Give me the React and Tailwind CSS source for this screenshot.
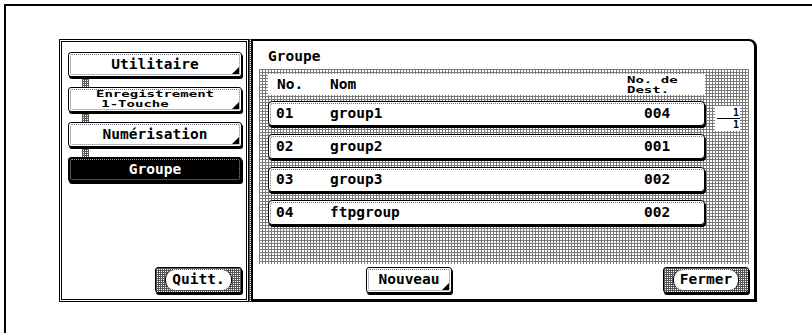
import React from "react";

const F = "font-['DejaVu_Sans_Mono','Liberation_Mono',monospace] font-bold";
const DITHER =
  "bg-white bg-[linear-gradient(to_right,#7a7a7a_1px,transparent_1px),linear-gradient(#7a7a7a_1px,transparent_1px)] bg-[length:3px_3px]";
const DITHER_DARK =
  "bg-white bg-[linear-gradient(to_right,#555_1px,transparent_1px),linear-gradient(#555_1px,transparent_1px)] bg-[length:2px_2px]";

function Tri() {
  return (
    <svg className="absolute right-[2px] bottom-[2px]" width="7" height="7" viewBox="0 0 7 7">
      <polygon points="7,0 7,7 0,7" fill="#000" />
    </svg>
  );
}

function Squish({ children, className = "" }) {
  return (
    <span className={`block h-[10px] overflow-visible text-[14px] leading-[10px] ${className}`}>
      <span className="block origin-center scale-y-[0.6] leading-[16px] -translate-y-[3px]">{children}</span>
    </span>
  );
}

function MenuBtn({ children, selected, tri = true }) {
  return (
    <div
      className={`relative h-[25px] w-[174px] rounded-[3px] border border-black shadow-[1px_2px_0_#000] ${
        selected ? "bg-black text-white" : "bg-white text-black"
      }`}
    >
      <div
        className={`absolute inset-[1px] rounded-[2px] border border-dotted ${
          selected ? "border-gray-400" : "border-gray-500"
        }`}
      />
      <div className={`relative flex h-full items-center justify-center ${F}`}>{children}</div>
      {tri && !selected && <Tri />}
    </div>
  );
}

function Connector() {
  return (
    <div className="flex h-[10px] pl-[14px]">
      <div className={`h-full w-[7px] ${DITHER_DARK}`} />
    </div>
  );
}

function PillBtn({ children, w }) {
  return (
    <div
      className={`flex h-[26px] items-stretch rounded-[3px] border border-black px-[9px] py-[2px] shadow-[1px_2px_0_#000] ${DITHER_DARK}`}
      style={{ width: w }}
    >
      <div
        className={`flex flex-1 items-center justify-center rounded-[9px] border-x border-black bg-white text-[14.5px] text-black ${F}`}
      >
        {children}
      </div>
    </div>
  );
}

function Row({ no, name, count }) {
  return (
    <div className="relative h-[25px] w-[437px] rounded-[4px] border border-black bg-white shadow-[1px_2px_0_#000]">
      <div className="absolute inset-y-[1px] left-[1px] right-[1px] rounded-[3px] border-l border-t border-dotted border-gray-500" />
      <div className={`relative flex h-full items-center text-[14.5px] text-black ${F}`}>
        <span className="w-[61px] pl-[7px]">{no}</span>
        <span className="flex-1">{name}</span>
        <span className="w-[60px]">{count}</span>
      </div>
    </div>
  );
}

export default function App() {
  const rows = [
    ["01", "group1", "004"],
    ["02", "group2", "001"],
    ["03", "group3", "002"],
    ["04", "ftpgroup", "002"],
  ];
  return (
    <div className="h-[333px] w-[812px] overflow-hidden bg-white pl-[4px] pt-[4px]">
      <div className="h-[329px] w-[808px] border-l-2 border-t-2 border-black pl-[53px] pt-[33px]">
        <div className="flex h-[263px]">
          {/* Left panel */}
          <div className="h-full w-[190px] border border-black bg-white p-[1px]">
            <div className="flex h-full flex-col border border-black pl-[6px] pt-[10px] pb-[6px]">
              <MenuBtn>
                <span className="text-[14.5px]">Utilitaire</span>
              </MenuBtn>
              <Connector />
              <MenuBtn>
                <span className="flex flex-col items-center pb-[1px]">
                  <Squish>Enregistrement</Squish>
                  <Squish className="pr-[40px]">1-Touche</Squish>
                </span>
              </MenuBtn>
              <Connector />
              <MenuBtn>
                <span className="text-[14.5px]">Numérisation</span>
              </MenuBtn>
              <Connector />
              <MenuBtn selected>
                <span className="text-[14.5px]">Groupe</span>
              </MenuBtn>
              <div className="mt-auto flex pl-[87px]">
                <PillBtn w={87}>Quitt.</PillBtn>
              </div>
            </div>
          </div>
          {/* divider */}
          <div className={`h-full w-[2px] ${DITHER_DARK}`} />
          {/* Right panel */}
          <div className="flex h-full w-[506px] flex-col rounded-tr-[8px] border-b-[3px] border-l-2 border-r-[3px] border-t-2 border-black bg-white pl-[6px] pr-[5px]">
            <div className={`flex h-[28px] items-center pl-[9px] pt-[4px] text-[14.5px] text-black ${F}`}>
              Groupe
            </div>
            <div className={`flex h-[195px] w-[490px] pl-[9px] pt-[5px] ${DITHER}`}>
              <div className="flex flex-col gap-[8px]">
                <div className={`mb-[-2px] flex h-[21px] w-[437px] items-center bg-white text-[14.5px] text-black ${F}`}>
                  <span className="w-[62px] pl-[9px]">No.</span>
                  <span className="flex-1">Nom</span>
                  <span className="flex w-[78px] flex-col">
                    <Squish>No. de</Squish>
                    <Squish>Dest.</Squish>
                  </span>
                </div>
                {rows.map((r) => (
                  <Row key={r[0]} no={r[0]} name={r[1]} count={r[2]} />
                ))}
              </div>
              <div className="ml-[10px] mt-[32px] flex h-[25px] w-[25px] flex-col bg-white">
                <div className={`flex h-[12px] items-end justify-end pr-[1px] text-[10px] leading-[10px] text-black ${F}`}>
                  1
                </div>
                <div className="ml-[2px] h-[1px] bg-black" />
                <div className={`flex h-[12px] items-start justify-end pr-[1px] text-[10px] leading-[11px] text-black ${F}`}>
                  1
                </div>
              </div>
            </div>
            <div className="mt-[3px] flex">
              <div className="relative ml-[107px] h-[26px] w-[86px] rounded-[3px] border border-black bg-white shadow-[1px_2px_0_#000]">
                <div className="absolute inset-[1px] rounded-[2px] border border-dotted border-gray-500" />
                <div className={`relative flex h-full items-center justify-center text-[14.5px] text-black ${F}`}>
                  Nouveau
                </div>
                <Tri />
              </div>
              <div className="ml-auto">
                <PillBtn w={86}>Fermer</PillBtn>
              </div>
            </div>
          </div>
        </div>
      </div>
    </div>
  );
}
